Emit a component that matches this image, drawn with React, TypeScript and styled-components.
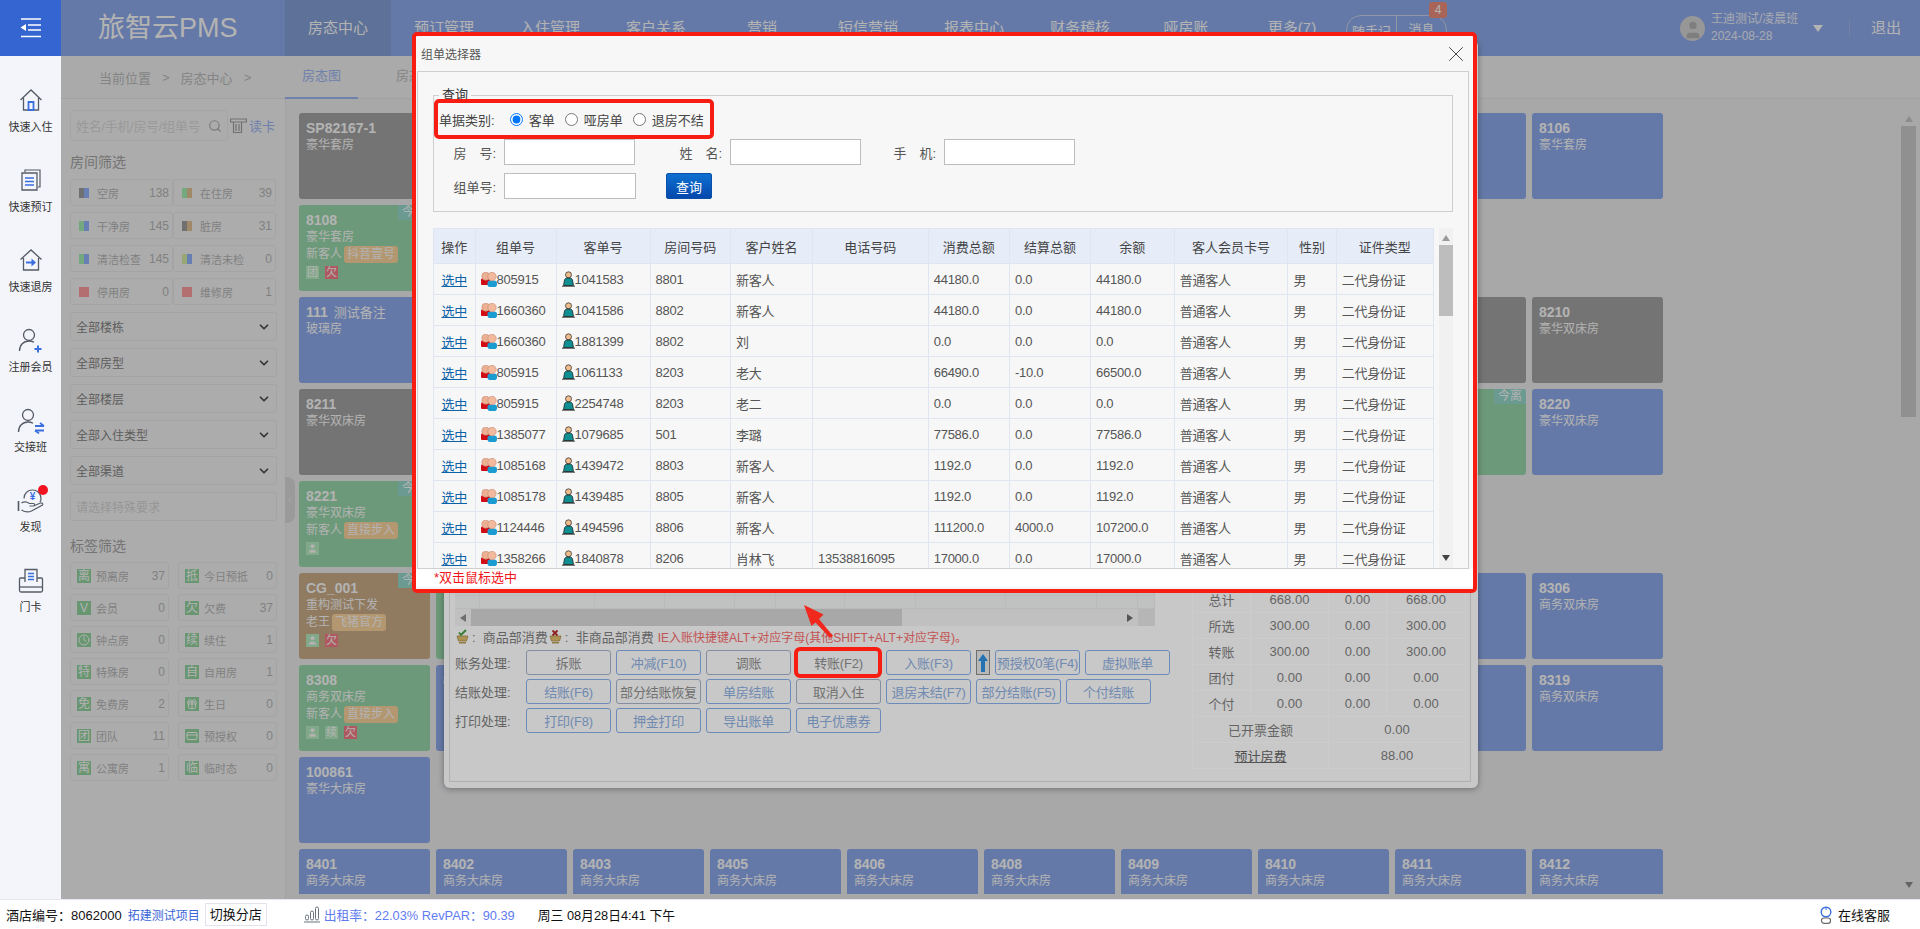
import React from "react";
import styled, { createGlobalStyle } from "styled-components";
import { ChevronDown, ChevronLeft, Clock, CreditCard, Gift, Search, User, X } from "lucide-react";

const GlobalStyle = createGlobalStyle`
  html, body {
    margin: 0;
    padding: 0;
    background: #fff;
    font-family: "Liberation Sans", "Noto Sans CJK SC", sans-serif;
  }
  * {
    box-sizing: border-box;
  }
`;

const Page = styled.div`
  width: 1920px;
  height: 929px;
  display: flex;
  flex-direction: column;
  overflow: hidden;
`;

const Top = styled.div`
  flex: 1;
  display: flex;
  min-height: 0;
`;

/* left rail */
const Rail = styled.aside`
  width: 61px;
  background: #f3f5fa;
  display: flex;
  flex-direction: column;
  align-items: center;
`;

const Toggle = styled.div`
  width: 100%;
  height: 56px;
  background: #3565d0;
  display: flex;
  align-items: center;
  justify-content: center;
`;

const RailList = styled.div`
  padding-top: 32px;
  display: flex;
  flex-direction: column;
  gap: 34px;
`;

const RailItem = styled.div`
  position: relative;
  height: 46px;
  width: 61px;
  display: flex;
  flex-direction: column;
  align-items: center;
  justify-content: space-between;
  font-size: 11px;
  line-height: 14px;
  color: #333;
`;

const RedDot = styled.span`
  position: absolute;
  top: -3px;
  left: 38px;
  width: 10px;
  height: 10px;
  border-radius: 50%;
  background: #f01420;
`;

/* everything right of the rail */
const Main = styled.main`
  position: relative;
  flex: 1;
  min-width: 0;
  display: flex;
  flex-direction: column;
  overflow: hidden;
`;

const Header = styled.header`
  height: 56px;
  background: #91adef;
  color: #fff;
  display: flex;
  align-items: center;
  flex: none;
`;

const Logo = styled.div`
  width: 224px;
  padding-left: 37px;
  font-size: 27px;
  line-height: 56px;
  white-space: nowrap;
`;

const MenuItem = styled.div<{ $active?: boolean }>`
  width: 106px;
  height: 56px;
  line-height: 56px;
  text-align: center;
  font-size: 15px;
  background: ${(p) => (p.$active ? "#87a2d9" : "transparent")};
`;

const NotePill = styled.div`
  position: relative;
  margin-left: 1px;
  width: 101px;
  height: 30px;
  border: 1px solid #d0d8ea;
  border-radius: 15px;
  display: flex;
  align-items: center;
  font-size: 13px;
  margin-top: 4px;
`;

const NotePart = styled.span`
  flex: 1;
  text-align: center;
  & + & {
    border-left: 1px solid #d0d8ea;
    line-height: 28px;
  }
`;

const NoteBadge = styled.span`
  position: absolute;
  left: 82px;
  top: -14px;
  width: 18px;
  height: 16px;
  border-radius: 3px;
  background: #f0907c;
  text-align: center;
  font-size: 12px;
  line-height: 16px;
`;

const UserBox = styled.div`
  margin-left: 233px;
  display: flex;
  align-items: center;
`;

const Avatar = styled.div`
  width: 25px;
  height: 25px;
  border-radius: 50%;
  background: #d8d8d8;
  color: #b4b4b4;
  display: flex;
  align-items: flex-end;
  justify-content: center;
  overflow: hidden;
`;

const UserText = styled.div`
  margin-left: 6px;
  width: 102px;
  font-size: 12px;
  line-height: 17px;
  opacity: 0.85;
`;

const Caret = styled.span`
  width: 0;
  height: 0;
  border-left: 5px solid transparent;
  border-right: 5px solid transparent;
  border-top: 7px solid #fff;
`;

const Logout = styled.div`
  margin-left: 26px;
  padding-left: 21px;
  border-left: 1px solid #a4bae8;
  font-size: 15px;
  line-height: 18px;
`;

const Workspace = styled.div`
  position: relative;
  flex: 1;
  min-height: 0;
  display: flex;
  flex-direction: column;
  background: #f0f0f2;
`;

const BreadBar = styled.div`
  height: 43px;
  flex: none;
  background: #f3f3f3;
  border-bottom: 1px solid #e6e6e6;
  display: flex;
  color: #bdbdbd;
  font-size: 13px;
`;

const Crumbs = styled.div`
  width: 224px;
  padding: 0 0 0 38px;
  display: flex;
  gap: 11px;
  align-items: center;
`;

const TabItem = styled.div<{ $active?: boolean }>`
  width: 73px;
  margin-right: 21px;
  text-align: center;
  line-height: 40px;
  color: ${(p) => (p.$active ? "#9eb9f6" : "#bdbdbd")};
  border-bottom: 2px solid ${(p) => (p.$active ? "#9eb9f6" : "transparent")};
  height: 43px;
`;

const Columns = styled.div`
  flex: 1;
  display: flex;
  min-height: 0;
`;

const LeftPanel = styled.div`
  position: relative;
  width: 225px;
  flex: none;
  background: #f6f6f6;
  border-right: 1px solid #e8e8e8;
  padding: 11px 8px 0 9px;
`;

const SearchRow = styled.div`
  display: flex;
  align-items: center;
  gap: 2px;
  color: #9eb9f6;
  font-size: 13px;
`;

const SearchBox = styled.div`
  width: 158px;
  height: 31px;
  border: 1px solid #ececec;
  border-radius: 4px;
  padding: 0 5px;
  display: flex;
  align-items: center;
  justify-content: space-between;
  color: #dcdcdc;
  font-size: 13px;
  white-space: nowrap;
  letter-spacing: -0.3px;
  svg {
    color: #b0b0b0;
  }
`;

const Heading = styled.div<{ $top: number }>`
  margin-top: ${(p) => p.$top}px;
  font-size: 14px;
  line-height: 20px;
  color: #a6a6a6;
`;

const FilterGrid = styled.div`
  margin-top: 7px;
  display: grid;
  grid-template-columns: 103px 103px;
  row-gap: 6px;
`;

const FilterCell = styled.div`
  height: 27px;
  border: 1px solid #ebebeb;
  border-radius: 3px;
  padding: 0 3px 0 8px;
  display: flex;
  align-items: center;
  font-size: 11px;
  color: #b8b8b8;
`;

const Swatch = styled.span<{ $a: string; $b: string }>`
  width: 10px;
  height: 10px;
  flex: none;
  margin-right: 8px;
  background: linear-gradient(90deg, ${(p) => p.$a} 50%, ${(p) => p.$b} 50%);
`;

const Count = styled.span`
  margin-left: auto;
  font-size: 12px;
`;

const SelectList = styled.div`
  margin-top: 7px;
  display: flex;
  flex-direction: column;
  gap: 7px;
`;

const SelectBox = styled.div<{ $empty?: boolean }>`
  width: 207px;
  height: 29px;
  border: 1px solid #ebebeb;
  border-radius: 3px;
  padding: 0 5px;
  display: flex;
  align-items: center;
  justify-content: space-between;
  font-size: 12px;
  color: ${(p) => (p.$empty ? "#d6d6d6" : "#878787")};
  svg {
    color: #4e4e4e;
  }
`;

const TagGrid = styled.div`
  margin-top: 6px;
  display: grid;
  grid-template-columns: 99px 99px;
  column-gap: 9px;
  row-gap: 5px;
`;

const TagCell = styled.div`
  height: 27px;
  border: 1px solid #ebebeb;
  border-radius: 3px;
  padding: 0 3px 0 6px;
  display: flex;
  align-items: center;
  font-size: 11px;
  color: #b8b8b8;
`;

const TagIcon = styled.span`
  width: 14px;
  height: 14px;
  flex: none;
  margin-right: 5px;
  background: #95d6a2;
  color: #fff;
  font-size: 12px;
  line-height: 14px;
  text-align: center;
  display: flex;
  align-items: center;
  justify-content: center;
`;

const Handle = styled.div`
  position: absolute;
  left: 224px;
  top: 378px;
  width: 10px;
  height: 46px;
  border-radius: 0 8px 8px 0;
  background: #dcdcdc;
  color: #f4f4f4;
  display: flex;
  align-items: center;
  justify-content: center;
`;

const RoomArea = styled.div`
  flex: 1;
  min-width: 0;
  padding: 14px 4px 5px 13px;
  display: flex;
`;

const RoomGrid = styled.div`
  flex: 1;
  display: grid;
  grid-template-columns: repeat(10, 131px);
  grid-auto-rows: 86px;
  gap: 6px;
  overflow: hidden;
`;

const toneColors = {
  blue: "#91adef",
  gray: "#a6a6a6",
  green: "#9bdbad",
  brown: "#ceaf8a",
};

type Tone = keyof typeof toneColors;

const RoomCard = styled.div<{ $tone: Tone; $row: number; $col: number }>`
  position: relative;
  grid-row: ${(p) => p.$row + 1};
  grid-column: ${(p) => p.$col + 1};
  background: ${(p) => toneColors[p.$tone]};
  border-radius: 3px;
  padding: 7px;
  color: #fff;
  font-size: 12px;
  line-height: 17px;
  overflow: hidden;
`;

const RoomNo = styled.div`
  width: fit-content;
  font-weight: 700;
  font-size: 14px;
  white-space: nowrap;
  span {
    font-weight: 400;
    font-size: 13px;
    margin-left: 6px;
  }
`;

const RoomLine = styled.div`
  width: fit-content;
`;

const RoomTag = styled.span`
  background: #ffd8a0;
  border-radius: 3px;
  padding: 0 3px;
  margin-left: 2px;
  display: inline-block;
`;

const LeaveBadge = styled.span`
  position: absolute;
  top: 0;
  right: 0;
  width: 32px;
  height: 15px;
  background: #98dccf;
  color: #fff;
  font-size: 12px;
  line-height: 15px;
  text-align: center;
`;

const MiniRow = styled.div`
  display: flex;
  gap: 6px;
  margin-top: 3px;
`;

const Mini = styled.span<{ $red?: boolean }>`
  width: 13px;
  height: 13px;
  background: ${(p) => (p.$red ? "#fb7f88" : "#b8f1c4")};
  color: #fff;
  font-size: 11px;
  line-height: 13px;
  text-align: center;
  display: flex;
  align-items: center;
  justify-content: center;
`;

const PageScroll = styled.div`
  width: 15px;
  flex: none;
  background: #f0f0f2;
  display: flex;
  flex-direction: column;
  align-items: center;
  justify-content: space-between;
  padding: 3px 0 6px;
`;

const ScrollThumb = styled.div<{ $height: number; $color: string }>`
  width: 100%;
  height: ${(p) => p.$height}px;
  margin: 4px 0 auto;
  background: ${(p) => p.$color};
`;

const ArrowUp = styled.span<{ $color: string }>`
  width: 0;
  height: 0;
  border-left: 4px solid transparent;
  border-right: 4px solid transparent;
  border-bottom: 6px solid ${(p) => p.$color};
`;

const ArrowDown = styled.span<{ $color: string }>`
  width: 0;
  height: 0;
  border-left: 4px solid transparent;
  border-right: 4px solid transparent;
  border-top: 6px solid ${(p) => p.$color};
`;

const Shade = styled.div<{ $alpha: number }>`
  position: absolute;
  inset: 0;
  background: rgba(0, 0, 0, ${(p) => p.$alpha});
`;

/* billing window behind the selector */
const BillWindow = styled.div`
  position: absolute;
  left: 383px;
  top: 40px;
  width: 1034px;
  height: 748px;
  background: #fafafa;
  border-radius: 6px;
  padding: 0 8px 6px 5px;
  box-shadow: 0 1px 6px rgba(0, 0, 0, 0.35);
  display: flex;
  font-size: 13px;
  color: #7e7e7e;
`;

const BillFrame = styled.div`
  flex: 1;
  border: 1px solid #dcdcdc;
  display: flex;
  align-items: flex-end;
  padding: 0 4px 12px 5px;
`;

const BillLeft = styled.div`
  width: 700px;
  margin-bottom: 32px;
`;

const GhostRows = styled.div`
  height: 34px;
  display: grid;
  grid-template-columns: 25px 115px 70px 70px 41px 69px 71px 90px 91px 41px 17px;
  grid-template-rows: 21px 13px;
  background: #f4f4f4;
`;

const GhostCell = styled.div`
  border-right: 1px solid #e9e9e9;
  border-bottom: 1px solid #e9e9e9;
  background: #f1f3f3;
  display: flex;
  align-items: flex-end;
  justify-content: center;
  padding-bottom: 5px;
`;

const GhostScroll = styled.div`
  height: 17px;
  display: flex;
  align-items: center;
  background: #f0f0f0;
`;

const GhostThumb = styled.div`
  margin-left: 5px;
  width: 431px;
  height: 17px;
  background: #d2d2d2;
`;

const ArrowLeft = styled.span`
  margin-left: 5px;
  width: 0;
  height: 0;
  border-top: 4px solid transparent;
  border-bottom: 4px solid transparent;
  border-right: 6px solid #8a8a8a;
`;

const ArrowRight = styled.span`
  margin-left: 225px;
  width: 0;
  height: 0;
  border-top: 4px solid transparent;
  border-bottom: 4px solid transparent;
  border-left: 6px solid #6a6a6a;
`;

const GhostCorner = styled.div`
  margin-left: auto;
  width: 17px;
  height: 17px;
  background: #e4e4e4;
`;

const LegendRow = styled.div`
  height: 20px;
  margin-bottom: 4px;
  display: flex;
  align-items: center;
  white-space: nowrap;
  gap: 1px;
  padding-left: 1px;
  font-size: 13px;
`;

const LegendRed = styled.span`
  margin-left: 3px;
  color: #f46a6a;
  font-size: 12px;
`;

const ActionRow = styled.div`
  display: flex;
  align-items: center;
  gap: 5px;
  height: 25px;
  margin-bottom: 4px;
`;

const ActionLabel = styled.span`
  width: 66px;
  flex: none;
  white-space: nowrap;
`;

const ActionButton = styled.button<{ $muted?: boolean }>`
  width: 85px;
  height: 25px;
  flex: none;
  padding: 0;
  background: #fafafa;
  border: 1px solid ${(p) => (p.$muted ? "#a4b2c8" : "#86b0ea")};
  border-radius: 3px;
  color: ${(p) => (p.$muted ? "#8e8e8e" : "#8cadde")};
  font-family: inherit;
  font-size: 13px;
  white-space: nowrap;
  letter-spacing: -0.2px;
`;

const UpBox = styled.span`
  width: 14px;
  height: 25px;
  flex: none;
  background: #e6e6e6;
  border: 1px solid #8a8a8a;
  display: flex;
  align-items: center;
  justify-content: center;
`;

const SumTable = styled.table`
  margin-left: 37px;
  width: 273px;
  border-collapse: collapse;
  table-layout: fixed;
  font-size: 13px;
  td {
    height: 26px;
    padding: 0;
    text-align: center;
    border: 1px solid #fff;
  }
`;

const SumLink = styled.span`
  text-decoration: underline;
  color: #666;
`;

/* the selector itself */
const Selector = styled.div`
  position: absolute;
  left: 351px;
  top: 32px;
  width: 1065px;
  height: 561px;
  border: 4px solid #f81d12;
  border-radius: 5px;
  background: #f7f7f7;
  display: flex;
  flex-direction: column;
  overflow: hidden;
`;

const TitleBar = styled.div`
  height: 35px;
  flex: none;
  padding: 0 4px 0 5px;
  display: flex;
  align-items: center;
  justify-content: space-between;
  font-size: 12px;
  color: #555;
  svg {
    color: #444;
  }
`;

const SelectorBody = styled.div`
  margin: 0 4px 0 1px;
  flex: none;
  height: 498px;
  border: 1px solid #cfcfcf;
  padding: 15px 15px 0 15px;
`;

const QueryBox = styled.fieldset`
  margin: 0;
  padding: 0 0 12px 0;
  height: 125px;
  border: 1px solid #cfcfcf;
`;

const QueryLegend = styled.legend`
  margin-left: 5px;
  padding: 0 3px;
  font-size: 13px;
  line-height: 16px;
  color: #333;
`;

const TypeRow = styled.div`
  position: relative;
  width: 280px;
  height: 40px;
  margin-top: -4px;
  border: 4px solid #f81d12;
  border-radius: 5px;
  padding-left: 1px;
  display: flex;
  align-items: center;
  font-size: 13px;
  color: #444;
  white-space: nowrap;
`;

const TypeName = styled.span`
  margin-right: 5px;
`;

const RadioLabel = styled.label`
  display: flex;
  align-items: center;
  gap: 6px;
  margin-left: 10px;
  input {
    margin: 0;
    width: 13px;
    height: 13px;
  }
`;

const QueryRow = styled.div`
  display: flex;
  align-items: center;
  height: 26px;
  margin-bottom: 8px;
  font-size: 13px;
  color: #555;
`;

const FieldLabel = styled.span<{ $w: number }>`
  width: ${(p) => p.$w}px;
  margin-right: 8px;
  text-align: right;
  white-space: nowrap;
`;

const TextInput = styled.input<{ $w?: number }>`
  width: ${(p) => p.$w ?? 131}px;
  height: 26px;
  border: 1px solid #bdbdbd;
  background: #fff;
  outline: none;
`;

const QueryButton = styled.button`
  width: 46px;
  height: 26px;
  margin-left: 30px;
  padding: 0;
  border: 1px solid #0a4fa8;
  border-radius: 2px;
  background: linear-gradient(180deg, #0e70d0, #0448ad);
  color: #fff;
  font-family: inherit;
  font-size: 13px;
`;

const TableBox = styled.div`
  margin-top: 16px;
  height: 340px;
  display: flex;
  overflow: hidden;
`;

const OrderTable = styled.table`
  width: 1000px;
  flex: none;
  align-self: flex-start;
  table-layout: fixed;
  border-collapse: collapse;
  font-size: 13px;
  color: #555;
  th,
  td {
    border: 1px solid #dfe5f1;
    white-space: nowrap;
    overflow: hidden;
  }
  th {
    height: 35px;
    padding: 0;
    background: #e6ecf8;
    color: #444;
    font-weight: 400;
    text-align: center;
  }
  td {
    height: 31px;
    padding: 0 0 0 5px;
    letter-spacing: -0.25px;
  }
`;

const PickLink = styled.a`
  display: block;
  text-align: center;
  margin-left: -5px;
  color: #0a62a8;
  text-decoration: underline;
`;

const IdCell = styled.span`
  display: flex;
  align-items: center;
`;

const TableScroll = styled.div`
  margin-left: 5px;
  width: 14px;
  flex: none;
  background: #f1f1f1;
  display: flex;
  flex-direction: column;
  align-items: center;
  padding: 7px 0 7px;
`;

const SelectorFoot = styled.div`
  flex: 1;
  background: #fff;
  border-bottom: 3px solid #f5f5f5;
  padding-left: 18px;
  font-size: 13px;
  line-height: 18px;
  color: #f0141a;
`;

const MarkBox = styled.div`
  position: absolute;
  left: 733px;
  top: 647px;
  width: 88px;
  height: 31px;
  border: 4px solid #f81d12;
  border-radius: 6px;
`;

const PointerArrow = styled.svg`
  position: absolute;
  left: 739px;
  top: 600px;
  width: 40px;
  height: 42px;
`;

/* bottom status bar */
const Footer = styled.footer`
  height: 30px;
  flex: none;
  border-top: 1px solid #e5e5ef;
  background: #fff;
  display: flex;
  align-items: center;
  padding: 0 30px 0 6px;
  font-size: 13px;
  color: #111;
  white-space: nowrap;
`;

const FooterLink = styled.span`
  margin-left: 6px;
  color: #3a66d8;
  font-size: 12px;
`;

const SwitchShop = styled.span`
  margin-left: 5px;
  width: 62px;
  height: 23px;
  border: 1px solid #e3e3ee;
  text-align: center;
  line-height: 21px;
  font-size: 13px;
`;

const RateText = styled.span`
  margin-left: 4px;
  color: #5f7cf2;
  font-size: 12.8px;
`;

const ChartWrap = styled.span`
  margin-left: 37px;
  display: flex;
`;

const DateText = styled.span`
  margin-left: 23px;
  font-size: 12.8px;
`;

const Service = styled.span`
  margin-left: auto;
  display: flex;
  align-items: center;
  gap: 5px;
  font-size: 13px;
`;

/* drawings */
const stroke = "#555b66";
const accent = "#3a6fe0";

const ToggleIcon = () => (
  <svg width="22" height="20" viewBox="0 0 22 20">
    <g fill="none" stroke="#fff" strokeWidth="1.6">
      <path d="M1 1h20M8 7h13M8 12h13M1 18.5h20" />
    </g>
    <path d="M6 6v7L0.5 9.5z" fill="#fff" />
  </svg>
);

const CheckInIcon = () => (
  <svg width="24" height="24" viewBox="0 0 24 24" fill="none">
    <path d="M1.5 12 12 2l10.500 10M4.500 10v12h15V10" stroke={stroke} strokeWidth="1.300" />
    <path d="M9.500 14h5v8h-5z" stroke={accent} strokeWidth="1.800" />
  </svg>
);

const BookIcon = () => (
  <svg width="24" height="24" viewBox="0 0 24 24" fill="none">
    <path d="M6 4V2h15v17h-2" stroke={stroke} strokeWidth="1.200" />
    <path d="M3 5h15v17H3z" stroke={stroke} strokeWidth="1.300" />
    <path d="M6 10h9M6 13.500h9M6 17h9" stroke={accent} strokeWidth="1.600" />
  </svg>
);

const CheckOutIcon = () => (
  <svg width="24" height="24" viewBox="0 0 24 24" fill="none">
    <path d="M1.500 11.500 12 2l10.500 9.500M4.500 10v12h15V10" stroke={stroke} strokeWidth="1.300" />
    <path d="M7 14.500h8" stroke={accent} strokeWidth="2" />
    <path d="M12.500 10.500 17 14.500l-4.500 4z" fill={accent} />
  </svg>
);

const MemberIcon = () => (
  <svg width="26" height="26" viewBox="0 0 26 26" fill="none">
    <circle cx="11" cy="7" r="5.500" stroke={stroke} strokeWidth="1.300" />
    <path d="M1.500 23c0-6 4-10 9.500-10 2 0 3.500.4 5 1.300" stroke={stroke} strokeWidth="1.300" />
    <path d="M20 17.500v7M16.500 21h7" stroke={accent} strokeWidth="2" />
  </svg>
);

const ShiftIcon = () => (
  <svg width="30" height="26" viewBox="0 0 30 26" fill="none">
    <circle cx="12" cy="7" r="5.500" stroke={stroke} strokeWidth="1.300" />
    <path d="M2.500 24c0-6 4-10 9.500-10 2 0 3.500.4 5 1.300" stroke={stroke} strokeWidth="1.300" />
    <path d="M19 18h9M19 22.500h9" stroke={accent} strokeWidth="1.800" />
    <path d="m24 15 4 3M23 25.500l-4-3" stroke={accent} strokeWidth="1.600" />
  </svg>
);

const FindIcon = () => (
  <svg width="28" height="26" viewBox="0 0 28 26" fill="none">
    <path d="M1.500 13v10" stroke={stroke} strokeWidth="1.600" />
    <path d="M7 10.500C7 5 11 2 15.500 2S24 5 24 10.500c0 1.500-.4 2.500-1 3.500" stroke={stroke} strokeWidth="1.200" />
    <path d="M4.500 15c3-2 5-1.500 8 .5h4c1.500 0 1.500 2.500 0 2.500h-4M4.500 22c4 2.500 7 2.500 10 1l11-6c1-1-.5-2.500-2-2l-7 3" stroke={stroke} strokeWidth="1.200" />
    <text x="15.500" y="12" textAnchor="middle" fontSize="10" fontWeight="700" fill={accent}>¥</text>
  </svg>
);

const DoorCardIcon = () => (
  <svg width="26" height="26" viewBox="0 0 26 26" fill="none">
    <path d="M7 14V1.500h12V14" stroke={stroke} strokeWidth="1.300" />
    <path d="M10 5.500h6M10 8.500h6M10 11.500h6" stroke={accent} strokeWidth="1.400" />
    <path d="M7 10H2.500a1 1 0 0 0-1 1v11.500a1.500 1.500 0 0 0 1.500 1.500h20a1.500 1.500 0 0 0 1.500-1.500V11a1 1 0 0 0-1-1H19" stroke={stroke} strokeWidth="1.300" />
    <path d="M1.500 19h23" stroke={stroke} strokeWidth="1.300" />
  </svg>
);

const CardReaderIcon = () => (
  <svg width="17" height="15" viewBox="0 0 17 15" fill="none" stroke="#a2a2a2" strokeWidth="1.200">
    <path d="M.5 1h16v3H.5zM3.500 4v10.500h8V4M6 6v7M9 6v7" />
  </svg>
);

const GroupIcon = () => (
  <svg width="16" height="15" viewBox="0 0 16 15" style={{ flex: "none" }}>
    <rect x="0" y="6.500" width="9" height="6.500" rx="1" fill="#d20c14" />
    <circle cx="4.800" cy="4.200" r="4" fill="#eeb092" stroke="#c58d78" strokeWidth="0.600" />
    <rect x="6.500" y="8.500" width="9.500" height="6.500" rx="2.800" fill="#1a9bd2" />
    <circle cx="11" cy="4.500" r="4.200" fill="#f2b99c" stroke="#c58d78" strokeWidth="0.600" />
  </svg>
);

const GuestIcon = () => (
  <svg width="13" height="16" viewBox="0 0 13 16" style={{ flex: "none" }}>
    <circle cx="6.500" cy="3.800" r="3" fill="#f0bd8e" stroke="#222" strokeWidth="0.700" />
    <path d="M1.500 14.500 2.500 9c.3-1.300 1.500-2 2.500-2h3c1 0 2.200.7 2.500 2l1 5.500z" fill="#0f8f92" stroke="#111" strokeWidth="0.700" />
    <path d="M0 15.200h13" stroke="#111" strokeWidth="0.800" />
  </svg>
);

const BasketIcon = ({ bad }: { bad?: boolean }) => (
  <svg width="15" height="15" viewBox="0 0 15 15" style={{ flex: "none" }}>
    <path d="M1 7h11l-1.500 5h-8z" fill="#d9b868" stroke="#a58a4a" strokeWidth="0.800" />
    <path d="M3 13h7v1.500H3z" fill="#b79a58" />
    {bad ? (
      <path d="M3.500 1.500l5 5M8.500 1.500l-5 5" stroke="#b32a2a" strokeWidth="1.800" />
    ) : (
      <path d="M3 3.500l2 2.500 5-5" stroke="#3f9a3a" strokeWidth="1.800" fill="none" />
    )}
  </svg>
);

const BarsIcon = () => (
  <svg width="16" height="17" viewBox="0 0 16 17" fill="none" stroke="#6b7280" strokeWidth="1">
    <rect x="1.500" y="9" width="3" height="5" rx="1.500" />
    <rect x="6.500" y="5" width="3" height="9" rx="1.500" />
    <rect x="11.500" y="1" width="3" height="13" rx="1.500" />
    <path d="M0 16h16" />
  </svg>
);

const ServiceIcon = () => (
  <svg width="14" height="18" viewBox="0 0 14 18" fill="none">
    <circle cx="7" cy="6" r="4.800" stroke="#3a6fe0" strokeWidth="1.400" />
    <path d="M7 1v3" stroke="#3a6fe0" strokeWidth="1" />
    <rect x="2.500" y="12" width="9" height="5.300" rx="2.600" stroke="#6a6a6a" strokeWidth="1.200" />
  </svg>
);

const railItems = [
  { label: "快速入住", icon: <CheckInIcon /> },
  { label: "快速预订", icon: <BookIcon /> },
  { label: "快速退房", icon: <CheckOutIcon /> },
  { label: "注册会员", icon: <MemberIcon /> },
  { label: "交接班", icon: <ShiftIcon /> },
  { label: "发现", icon: <FindIcon />, dot: true },
  { label: "门卡", icon: <DoorCardIcon /> },
];

const menus = ["房态中心", "预订管理", "入住管理", "客户关系", "营销", "短信营销", "报表中心", "财务稽核", "哑房账", "更多(7)"];

const roomFilters = [
  { name: "空房", count: 138, a: "#a0a0a0", b: "#96b5ff" },
  { name: "在住房", count: 39, a: "#a5efb5", b: "#e3c494" },
  { name: "干净房", count: 145, a: "#a5efb5", b: "#96b5ff" },
  { name: "脏房", count: 31, a: "#a0a0a0", b: "#e3c494" },
  { name: "清洁检查", count: 145, a: "#a5efb5", b: "#96b5ff" },
  { name: "清洁未检", count: 0, a: "#dbeea6", b: "#96b5ff" },
  { name: "停用房", count: 0, a: "#ff9f9f", b: "#ff9f9f" },
  { name: "维修房", count: 1, a: "#ff9f9f", b: "#ff9f9f" },
];

const selects = ["全部楼栋", "全部房型", "全部楼层", "全部入住类型", "全部渠道"];

const tagFilters: { name: string; count: number; icon: React.ReactNode }[] = [
  { name: "预离房", count: 37, icon: "离" },
  { name: "今日预抵", count: 0, icon: "抵" },
  { name: "会员", count: 0, icon: "V" },
  { name: "欠费", count: 37, icon: "欠" },
  { name: "钟点房", count: 0, icon: <Clock size={12} /> },
  { name: "续住", count: 1, icon: "续" },
  { name: "特殊房", count: 0, icon: "特" },
  { name: "自用房", count: 1, icon: "自" },
  { name: "免费房", count: 2, icon: "免" },
  { name: "生日", count: 0, icon: <Gift size={12} /> },
  { name: "团队", count: 11, icon: "团" },
  { name: "预授权", count: 0, icon: <CreditCard size={12} /> },
  { name: "公寓房", count: 1, icon: "寓" },
  { name: "临时态", count: 0, icon: "临" },
];

interface Room {
  row: number;
  col: number;
  no: string;
  note?: string;
  name: string;
  tone: Tone;
  guest?: string;
  tag?: string;
  minis?: string[];
  leaving?: boolean;
}

const bottomRooms = ["8401", "8402", "8403", "8405", "8406", "8408", "8409", "8410", "8411", "8412"];

const rooms: Room[] = [
  { row: 0, col: 0, no: "SP82167-1", name: "豪华套房", tone: "gray" },
  { row: 1, col: 0, no: "8108", name: "豪华套房", tone: "green", guest: "新客人", tag: "抖音壹号", minis: ["团", "欠"], leaving: true },
  { row: 2, col: 0, no: "111", note: "测试备注", name: "玻璃房", tone: "blue" },
  { row: 3, col: 0, no: "8211", name: "豪华双床房", tone: "gray" },
  { row: 4, col: 0, no: "8221", name: "豪华双床房", tone: "green", guest: "新客人", tag: "直接步入", minis: ["人"], leaving: true },
  { row: 5, col: 0, no: "CG_001", name: "重构测试下发", tone: "brown", guest: "老王", tag: "飞猪官方", minis: ["人", "欠"], leaving: true },
  { row: 6, col: 0, no: "8308", name: "商务双床房", tone: "green", guest: "新客人", tag: "直接步入", minis: ["人", "续", "欠"] },
  { row: 7, col: 0, no: "100861", name: "豪华大床房", tone: "blue" },
  { row: 5, col: 1, no: "8302", name: "商务大床房", tone: "green" },
  { row: 6, col: 1, no: "8309", name: "商务双床房", tone: "blue" },
  { row: 0, col: 8, no: "8105", name: "豪华套房", tone: "blue" },
  { row: 2, col: 8, no: "8209", name: "豪华双床房", tone: "gray" },
  { row: 3, col: 8, no: "8219", name: "豪华双床房", tone: "green", leaving: true },
  { row: 5, col: 8, no: "8305", name: "商务双床房", tone: "blue" },
  { row: 6, col: 8, no: "8318", name: "商务双床房", tone: "blue" },
  { row: 0, col: 9, no: "8106", name: "豪华套房", tone: "blue" },
  { row: 2, col: 9, no: "8210", name: "豪华双床房", tone: "gray" },
  { row: 3, col: 9, no: "8220", name: "豪华双床房", tone: "blue" },
  { row: 5, col: 9, no: "8306", name: "商务双床房", tone: "blue" },
  { row: 6, col: 9, no: "8319", name: "商务双床房", tone: "blue" },
  ...bottomRooms.map((no, col) => ({ row: 8, col, no, name: "商务大床房", tone: "blue" as Tone })),
];

const ghostCols = Array.from({ length: 22 }, (_, i) => i);

const actionRows = [
  {
    label: "账务处理:",
    buttons: ["拆账", "冲减(F10)", "调账", "转账(F2)", "入账(F3)", "|", "预授权0笔(F4)", "虚拟账单"],
  },
  {
    label: "结账处理:",
    buttons: ["结账(F6)", "部分结账恢复", "单房结账", "取消入住", "退房未结(F7)", "部分结账(F5)", "个付结账"],
  },
  { label: "打印处理:", buttons: ["打印(F8)", "押金打印", "导出账单", "电子优惠券"] },
];

const mutedButtons = ["部分结账恢复", "取消入住", "拆账", "调账", "转账(F2)"];

const sumRows = [
  ["总计", "668.00", "0.00", "668.00"],
  ["所选", "300.00", "0.00", "300.00"],
  ["转账", "300.00", "0.00", "300.00"],
  ["团付", "0.00", "0.00", "0.00"],
  ["个付", "0.00", "0.00", "0.00"],
];

const columnWidths = [41.6, 81, 94, 80.4, 82, 115.7, 81.3, 81, 83.7, 113.8, 48.2, 97.2];

const tableHead = ["操作", "组单号", "客单号", "房间号码", "客户姓名", "电话号码", "消费总额", "结算总额", "余额", "客人会员卡号", "性别", "证件类型"];

const orders = [
  ["805915", "1041583", "8801", "新客人", "", "44180.0", "0.0", "44180.0"],
  ["1660360", "1041586", "8802", "新客人", "", "44180.0", "0.0", "44180.0"],
  ["1660360", "1881399", "8802", "刘", "", "0.0", "0.0", "0.0"],
  ["805915", "1061133", "8203", "老大", "", "66490.0", "-10.0", "66500.0"],
  ["805915", "2254748", "8203", "老二", "", "0.0", "0.0", "0.0"],
  ["1385077", "1079685", "501", "李璐", "", "77586.0", "0.0", "77586.0"],
  ["1085168", "1439472", "8803", "新客人", "", "1192.0", "0.0", "1192.0"],
  ["1085178", "1439485", "8805", "新客人", "", "1192.0", "0.0", "1192.0"],
  ["1124446", "1494596", "8806", "新客人", "", "111200.0", "4000.0", "107200.0"],
  ["1358266", "1840878", "8206", "肖林飞", "13538816095", "17000.0", "0.0", "17000.0"],
];

const App: React.FC = () => {
  return (
    <Page>
      <GlobalStyle />
      <Top>
        <Rail>
          <Toggle>
            <ToggleIcon />
          </Toggle>
          <RailList>
            {railItems.map((item) => (
              <RailItem key={item.label}>
                {item.icon}
                <span>{item.label}</span>
                {item.dot && <RedDot />}
              </RailItem>
            ))}
          </RailList>
        </Rail>

        <Main>
          <Header>
            <Logo>旅智云PMS</Logo>
            {menus.map((m, i) => (
              <MenuItem key={m} $active={i === 0}>
                {m}
              </MenuItem>
            ))}
            <NotePill>
              <NotePart>随手记</NotePart>
              <NotePart>消息</NotePart>
              <NoteBadge>4</NoteBadge>
            </NotePill>
            <UserBox>
              <Avatar>
                <User size={22} fill="#b4b4b4" strokeWidth={0} />
              </Avatar>
              <UserText>
                王迪测试/凌晨班
                <br />
                2024-08-28
              </UserText>
              <Caret />
              <Logout>退出</Logout>
            </UserBox>
          </Header>

          <Workspace>
            <BreadBar>
              <Crumbs>
                <span>当前位置</span>
                <span>&gt;</span>
                <span>房态中心</span>
                <span>&gt;</span>
              </Crumbs>
              <TabItem $active>房态图</TabItem>
              <TabItem>房态表</TabItem>
            </BreadBar>
            <Columns>
              <LeftPanel>
                <SearchRow>
                  <SearchBox>
                    姓名/手机/房号/组单号
                    <Search size={14} />
                  </SearchBox>
                  <CardReaderIcon />
                  读卡
                </SearchRow>
                <Heading $top={11}>房间筛选</Heading>
                <FilterGrid>
                  {roomFilters.map((f) => (
                    <FilterCell key={f.name}>
                      <Swatch $a={f.a} $b={f.b} />
                      {f.name}
                      <Count>{f.count}</Count>
                    </FilterCell>
                  ))}
                </FilterGrid>
                <SelectList>
                  {selects.map((s) => (
                    <SelectBox key={s}>
                      {s}
                      <ChevronDown size={14} strokeWidth={3} />
                    </SelectBox>
                  ))}
                  <SelectBox $empty>请选择特殊要求</SelectBox>
                </SelectList>
                <Heading $top={15}>标签筛选</Heading>
                <TagGrid>
                  {tagFilters.map((t) => (
                    <TagCell key={t.name}>
                      <TagIcon>{t.icon}</TagIcon>
                      {t.name}
                      <Count>{t.count}</Count>
                    </TagCell>
                  ))}
                </TagGrid>
                <Handle>
                  <ChevronLeft size={12} />
                </Handle>
              </LeftPanel>
              <RoomArea>
                <RoomGrid>
                  {rooms.map((r) => (
                    <RoomCard key={r.no} $tone={r.tone} $row={r.row} $col={r.col}>
                      <RoomNo>
                        {r.no}
                        {r.note && <span>{r.note}</span>}
                      </RoomNo>
                      <RoomLine>{r.name}</RoomLine>
                      {r.guest && (
                        <RoomLine>
                          {r.guest}
                          <RoomTag>{r.tag}</RoomTag>
                        </RoomLine>
                      )}
                      {r.minis && (
                        <MiniRow>
                          {r.minis.map((m) => (
                            <Mini key={m} $red={m === "欠"}>
                              {m === "人" ? <User size={11} fill="#fff" color="#fff" strokeWidth={1} /> : m}
                            </Mini>
                          ))}
                        </MiniRow>
                      )}
                      {r.leaving && <LeaveBadge>今离</LeaveBadge>}
                    </RoomCard>
                  ))}
                </RoomGrid>
                <PageScroll>
                  <ArrowUp $color="#c8c8c8" />
                  <ScrollThumb $height={291} $color="#cdcdcd" />
                  <ArrowDown $color="#8f8f8f" />
                </PageScroll>
              </RoomArea>
            </Columns>
          </Workspace>

          <Shade $alpha={0.12} />

          <BillWindow>
            <BillFrame>
              <BillLeft>
                <GhostRows>
                  {ghostCols.map((c) => (
                    <GhostCell key={c}>{c === 10 && <ArrowDown $color="#6a6a6a" />}</GhostCell>
                  ))}
                </GhostRows>
                <GhostScroll>
                  <ArrowLeft />
                  <GhostThumb />
                  <ArrowRight />
                  <GhostCorner />
                </GhostScroll>
                <LegendRow>
                  <BasketIcon />
                  :&nbsp;&nbsp;商品部消费
                  <BasketIcon bad />
                  :&nbsp;&nbsp;非商品部消费
                  <LegendRed>IE入账快捷键ALT+对应字母(其他SHIFT+ALT+对应字母)。</LegendRed>
                </LegendRow>
                {actionRows.map((row) => (
                  <ActionRow key={row.label}>
                    <ActionLabel>{row.label}</ActionLabel>
                    {row.buttons.map((b) =>
                      b === "|" ? (
                        <UpBox key={b}>
                          <svg width="10" height="18" viewBox="0 0 10 18">
                            <path d="M5 0 10 7H7v11H3V7H0z" fill="#2f8fe0" />
                          </svg>
                        </UpBox>
                      ) : (
                        <ActionButton key={b} $muted={mutedButtons.includes(b)}>
                          {b}
                        </ActionButton>
                      )
                    )}
                  </ActionRow>
                ))}
              </BillLeft>
              <SumTable>
                <colgroup>
                  <col style={{ width: 58 }} />
                  <col style={{ width: 78 }} />
                  <col style={{ width: 58 }} />
                  <col style={{ width: 79 }} />
                </colgroup>
                <tbody>
                  {sumRows.map((r) => (
                    <tr key={r[0]}>
                      {r.map((c, i) => (
                        <td key={i}>{c}</td>
                      ))}
                    </tr>
                  ))}
                  <tr>
                    <td colSpan={2}>已开票金额</td>
                    <td colSpan={2}>0.00</td>
                  </tr>
                  <tr>
                    <td colSpan={2}>
                      <SumLink>预计房费</SumLink>
                    </td>
                    <td colSpan={2}>88.00</td>
                  </tr>
                </tbody>
              </SumTable>
            </BillFrame>
          </BillWindow>

          <Shade $alpha={0.2} />

          <Selector>
            <TitleBar>
              组单选择器
              <X size={26} strokeWidth={0.9} />
            </TitleBar>
            <SelectorBody>
              <QueryBox>
                <QueryLegend>查询</QueryLegend>
                <TypeRow>
                  <TypeName>单据类别:</TypeName>
                  <RadioLabel>
                    <input type="radio" name="billType" defaultChecked />
                    客单
                  </RadioLabel>
                  <RadioLabel>
                    <input type="radio" name="billType" />
                    哑房单
                  </RadioLabel>
                  <RadioLabel>
                    <input type="radio" name="billType" />
                    退房不结
                  </RadioLabel>
                </TypeRow>
                <QueryRow>
                  <FieldLabel $w={62}>房　号:</FieldLabel>
                  <TextInput />
                  <FieldLabel $w={87}>姓　名:</FieldLabel>
                  <TextInput />
                  <FieldLabel $w={75}>手　机:</FieldLabel>
                  <TextInput />
                </QueryRow>
                <QueryRow>
                  <FieldLabel $w={62}>组单号:</FieldLabel>
                  <TextInput $w={132} />
                  <QueryButton>查询</QueryButton>
                </QueryRow>
              </QueryBox>
              <TableBox>
                <OrderTable>
                  <colgroup>
                    {columnWidths.map((w, i) => (
                      <col key={i} style={{ width: w }} />
                    ))}
                  </colgroup>
                  <thead>
                    <tr>
                      {tableHead.map((h) => (
                        <th key={h}>{h}</th>
                      ))}
                    </tr>
                  </thead>
                  <tbody>
                    {orders.map((o) => (
                      <tr key={o[1]}>
                        <td>
                          <PickLink>选中</PickLink>
                        </td>
                        <td>
                          <IdCell>
                            <GroupIcon />
                            {o[0]}
                          </IdCell>
                        </td>
                        <td>
                          <IdCell>
                            <GuestIcon />
                            {o[1]}
                          </IdCell>
                        </td>
                        {o.slice(2).map((c, i) => (
                          <td key={i}>{c}</td>
                        ))}
                        <td>普通客人</td>
                        <td>男</td>
                        <td>二代身份证</td>
                      </tr>
                    ))}
                  </tbody>
                </OrderTable>
                <TableScroll>
                  <ArrowUp $color="#9a9a9a" />
                  <ScrollThumb $height={71} $color="#bdbdbd" />
                  <ArrowDown $color="#444" />
                </TableScroll>
              </TableBox>
            </SelectorBody>
            <SelectorFoot>*双击鼠标选中</SelectorFoot>
          </Selector>

          <MarkBox />
          <PointerArrow viewBox="0 0 40 42">
            <polygon points="4,5 23.500,14.500 19,19 33,36 30,38 15.500,22.500 11.500,26" fill="#f0281e" />
          </PointerArrow>
        </Main>
      </Top>

      <Footer>
        酒店编号：8062000
        <FooterLink>拓建测试项目</FooterLink>
        <SwitchShop>切换分店</SwitchShop>
        <ChartWrap>
          <BarsIcon />
        </ChartWrap>
        <RateText>出租率：22.03% RevPAR：90.39</RateText>
        <DateText>周三 08月28日4:41 下午</DateText>
        <Service>
          <ServiceIcon />
          在线客服
        </Service>
      </Footer>
    </Page>
  );
};

export default App;
